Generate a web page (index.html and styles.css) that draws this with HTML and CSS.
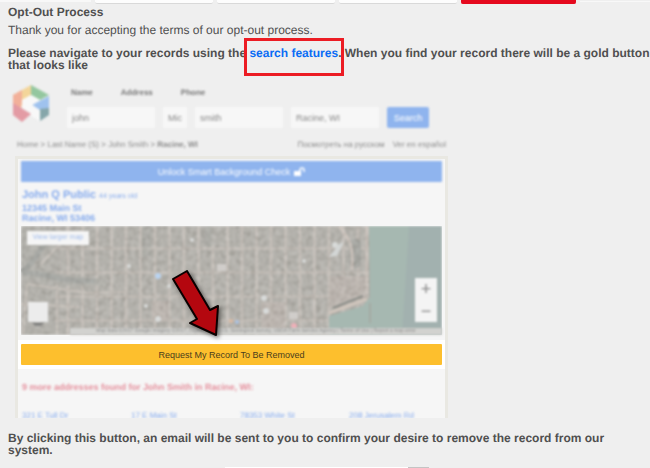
FILE: index.html
```html
<!DOCTYPE html>
<html lang="en">
<head>
    <meta charset="UTF-8">
    <meta name="viewport" content="width=device-width, initial-scale=1.0">
    <title>Opt-Out Process</title>
    <link rel="stylesheet" href="styles.css">
</head>
<body>
    <div class="topbar">
        <span class="strip"></span>
        <span class="box"></span>
        <span class="box"></span>
        <span class="box"></span>
        <span class="box red"></span>
        <span class="rest"></span>
    </div>

    <main class="content">
        <h1>Opt-Out Process</h1>
        <p class="thanks">Thank you for accepting the terms of our opt-out process.</p>
        <p class="note">Please navigate to your records using the <a class="search-link" href="#">search features</a>. When you find your record there will be a gold button that looks like</p>

        <div class="sample">
            <div class="sample-header soft">
                <svg class="logo" viewBox="0 0 37 37">
                    <path d="M0 10 18 0v10L9 15v6L0 17z" fill="#f3d59a"/>
                    <path d="M0 10 9 5v10l-1 9-8-5z" fill="#f2b09a"/>
                    <path d="M18 0 36 10l-9 5-9-5z" fill="#94c79f"/>
                    <path d="M36 11v13l-9 2-8-6z" fill="#9fc2ee"/>
                    <path d="M0 18l18 11-9 8-9-7z" fill="#e39ba4"/>
                    <path d="M27 24l9-1v7l-9 6z" fill="#86a6aa"/>
                    <path d="M18 10l9 5-8 5 8 5v11l-9-5v-3l-9-6v-7z" fill="#f8f8f8"/>
                </svg>
                <div class="search">
                    <nav class="tabs">
                        <a href="#">Name</a>
                        <a href="#">Address</a>
                        <a href="#">Phone</a>
                    </nav>
                    <form class="fields">
                        <input type="text" value="john" aria-label="First name">
                        <input class="mid" type="text" value="Mic" aria-label="Middle name">
                        <input type="text" value="smith" aria-label="Last name">
                        <input type="text" value="Racine, WI" aria-label="City and state">
                        <button type="button">Search</button>
                    </form>
                </div>
            </div>

            <div class="crumbs soft">
                <span>Home &gt; Last Name (S) &gt; John Smith &gt; <b>Racine, WI</b></span>
                <span class="langs"><a href="#">Посмотреть на русском</a><a href="#">Ver en español</a></span>
            </div>

            <div class="card">
                <button class="unlock soft" type="button">Unlock Smart Background Check
                    <svg width="11" height="10" viewBox="0 0 11 10"><path d="M0 4h7v5H0z" fill="#fff"/><path d="M6 5V3a2 2 0 0 1 4 0v2" fill="none" stroke="#fff" stroke-width="1.5"/></svg>
                </button>
                <div class="person soft">
                    <h2>John Q Public <small>44 years old</small></h2>
                    <address>12345 Main St<br>Racine, WI 53406</address>
                </div>

                <div class="map">
                    <svg class="aerial" viewBox="0 0 421 109" preserveAspectRatio="xMidYMid slice">
                        <defs>
                            <pattern id="blocks" width="14.5" height="24" patternUnits="userSpaceOnUse" patternTransform="translate(2 -3)">
                                <path d="M1.5 0v24" stroke="#cac1ba" stroke-width="2.4"/>
                                <path d="M8.5 0v24" stroke="#b5b1ab" stroke-width="1"/>
                                <path d="M0 1.5h14.5" stroke="#c4bbb4" stroke-width="2"/>
                            </pattern>
                            <filter id="grain" x="0" y="0" width="100%" height="100%">
                                <feTurbulence type="fractalNoise" baseFrequency="0.2" numOctaves="3" seed="4"/>
                                <feColorMatrix values="1.2 .4 0 0 -.15  1.2 .4 0 0 -.16  1.2 .4 0 0 -.19  0 0 0 0 .22"/>
                            </filter>
                        </defs>
                        <g class="ground">
                            <path d="M0 0h421v109H0z" fill="#a9a7a1"/>
                            <path d="M34 0h314v109H34z" fill="url(#blocks)" opacity=".75"/>
                            <path d="M0 0h34L5 40l40 9 40 4v6l-43 1-42-8z" fill="#a8a7a1"/>
                            <path d="M0 46C12 40 20 20 34 4M2 47c25-1 30 9 72 8" fill="none" stroke="#999b97" stroke-width="5"/>
                            <path d="M20 38 48 8M6 58l60 9 40-1M0 78l58 3M36 58v50M6 58l-4 50" fill="none" stroke="#c0b9b2" stroke-width="2"/>
                            <path d="M121 0h9v30h-9zM183 0h10v20h-10z" fill="#9c9d98" opacity=".6"/>
                            <path d="M240 76h24v33h-24zM308 50h38v21l-26 11h-12zM131 75h16v20h-16z" fill="#b5ada6" opacity=".8"/>
                            <rect x="328" y="13" width="12" height="29" rx="5" fill="#999a95"/>
                            <path d="M318 0c8 12 15 14 13 44M346 0v68" fill="none" stroke="#c6bcb5" stroke-width="3"/>
                            <path d="M0 0h348v109H0z" filter="url(#grain)"/>
                            <path d="M308 31l10-13 5-2-7 14z" fill="#d3d6d5"/>
                            <path d="M348 0h73v109h-113V90l34-10 7-9z" fill="#a6b8b1"/>
                            <path d="M388 0h33v109h-40z" fill="#a2b1af"/>
                            <path d="M308 87l38-14" stroke="#cfc5bc" stroke-width="3"/>
                            <path d="M312 82l30-12" stroke="#8c8e89" stroke-width="2"/>
                            <path d="M349 77v20" stroke="#a39c95"/>
                            <path d="M196 38h9v7h-9zM268 86h9v7h-9z" fill="#d0cdca"/>
                            <g fill="#d8dad9">
                                <circle cx="171" cy="14" r="2"/><circle cx="125" cy="80" r="2"/><circle cx="148" cy="60" r="2"/>
                                <circle cx="283" cy="35" r="2"/><circle cx="243" cy="72" r="3"/><circle cx="245" cy="85" r="3"/>
                                <circle cx="137" cy="93" r="3"/><circle cx="108" cy="40" r="2"/><circle cx="314" cy="19" r="3"/>
                            </g>
                            <circle cx="137" cy="50" r="3" fill="#b9d3f0"/>
                            <circle cx="273" cy="100" r="3" fill="#eeb0b8"/>
                            <circle cx="210" cy="95" r="2" fill="#dcbaa2"/>
                            <circle cx="216" cy="96" r="2" fill="#aac2e2"/>
                            <path d="M11 96h12l-3 4h-6z" fill="#868684"/>
                        </g>
                    </svg>
                    <a class="map-link soft" href="#">View larger map</a>
                    <span class="thumb soft"></span>
                    <div class="zoom soft">
                        <button type="button" aria-label="Zoom in">+</button>
                        <button type="button" aria-label="Zoom out">−</button>
                    </div>
                    <div class="credits soft">Map data ©2017 Google Imagery ©2017, DigitalGlobe, U.S. Geological Survey, USDA Farm Service Agency | Terms of Use | Report a map error</div>
                    <svg class="arrow" width="56" height="74" viewBox="0 0 56 74">
                        <path d="M5 11 19 3 42 42 50 38 48 67 22 55 29 51z" fill="#b4070f" stroke="#0a0000" stroke-width="2" stroke-linejoin="round"/>
                    </svg>
                </div>

                <div class="remove">
                    <button type="button">Request My Record To Be Removed</button>
                </div>

                <p class="more soft">9 more addresses found for John Smith in Racine, WI:</p>
                <div class="addresses">
                    <a href="#">321 E Tull Dr</a>
                    <a href="#">17 E Main St</a>
                    <a href="#">78353 White St</a>
                    <a href="#">208 Jerusalem Rd</a>
                </div>
            </div>
        </div>

        <p class="note confirm">By clicking this button, an email will be sent to you to confirm your desire to remove the record from our system.</p>
    </main>

    <div class="bottom"><span class="line"></span><span class="mark"></span></div>
</body>
</html>
```
FILE: styles.css
```css
* {
    box-sizing: border-box;
}
body {
    margin: 0;
    background: #efefef;
    color: #505050;
    font-family: "Liberation Sans", Arial, sans-serif;
    font-size: 12px;
    text-rendering: geometricPrecision;
    overflow: hidden;
}
h1, h2, p, address {
    margin: 0;
}
a {
    color: inherit;
    text-decoration: none;
}
button, input {
    border: 0;
    margin: 0;
    padding: 0;
    font-family: inherit;
}

/* cut off search bar at the top */
.topbar {
    display: flex;
    gap: 4px;
    height: 4px;
}
.strip {
    width: 91px;
    height: 2px;
    background: #f8f8f8;
}
.box {
    width: 118px;
    background: #fdfdfd;
    border-bottom: 1px solid #d9d9d9;
    border-radius: 0 0 2px 2px;
}
.box.red {
    width: 115px;
    background: #e5091e;
    border-color: #e5091e;
}
.rest {
    flex: 1;
    height: 2px;
    border-bottom: 1px solid #f8f8f8;
}

.content {
    padding-left: 8px;
}
h1 {
    font-size: 12px;
    line-height: 16px;
}
.thanks {
    margin-top: 2px;
    line-height: 16px;
}
.note {
    margin-top: 9px;
    font-weight: bold;
    line-height: 12px;
}
.search-link {
    position: relative;
    color: #0a6cf5;
}
.search-link::after {
    content: "";
    position: absolute;
    inset: -8px -6px -16px -5px;
    border: 3px solid #ec1c24;
}

/* example of a record page */
.sample {
    max-width: 440px;
    padding: 14px 0 0 1px;
}
.soft {
    filter: blur(1px);
}
.sample-header {
    display: flex;
    gap: 17px;
    padding-left: 4px;
}
.logo {
    flex: none;
    width: 37px;
    height: 37px;
}
.search {
    flex: 1;
    min-width: 0;
}
.tabs {
    display: flex;
    gap: 28px;
    padding-left: 4px;
    font-size: 8px;
    font-weight: bold;
    line-height: 16px;
    color: #777;
}
.fields {
    display: flex;
    gap: 8px;
    margin-top: 6px;
    padding-right: 19px;
}
.fields input {
    flex: 1;
    min-width: 0;
    height: 21px;
    padding: 0 5px;
    background: #f7f7f7;
    color: #888;
    font-size: 9px;
}
.fields .mid {
    flex: 0 0 24px;
}
.fields button {
    width: 42px;
    background: #8fb4ee;
    color: #fff;
    font-size: 9px;
    border-radius: 2px;
}
.crumbs {
    display: flex;
    justify-content: space-between;
    margin-top: 11px;
    padding: 0 2px 0 8px;
    font-size: 8px;
    line-height: 12px;
    color: #8c8c8c;
}
.langs {
    display: flex;
    gap: 8px;
}
.card {
    margin: 5px 0 0 6px;
    padding-top: 2px;
    border: 3px solid #e9e8e2;
    border-bottom: 0;
    background: #f6f6f6;
}
.unlock {
    display: flex;
    align-items: center;
    justify-content: center;
    gap: 4px;
    width: calc(100% - 6px);
    height: 21px;
    margin: 0 3px;
    background: #8fb4ee;
    color: #fff;
    font-size: 9px;
    border-radius: 1px;
}
.person {
    padding: 7px 4px 3px;
    color: #86abed;
}
.person h2 {
    font-size: 11px;
    line-height: 13px;
}
.person small {
    font-size: 7px;
    font-weight: normal;
}
.person address {
    font-size: 9px;
    font-weight: bold;
    font-style: normal;
    line-height: 10px;
}

.map {
    position: relative;
    height: 109px;
    margin: 0 3px;
}
.aerial {
    display: block;
    width: 100%;
    height: 100%;
}
.ground {
    filter: blur(0.8px);
}
.map-link {
    position: absolute;
    left: 6px;
    top: 5px;
    width: 62px;
    background: #f5f5f5;
    color: #9db9ea;
    font-size: 7px;
    line-height: 14px;
    text-align: center;
}
.thumb {
    position: absolute;
    left: 7px;
    bottom: 13px;
    width: 20px;
    height: 20px;
    background: #ececec;
}
.zoom {
    position: absolute;
    right: 5px;
    bottom: 13px;
    width: 22px;
    background: #f4f4f4;
}
.zoom button {
    display: block;
    width: 100%;
    height: 22px;
    background: none;
    color: #888;
    font-size: 18px;
    line-height: 22px;
}
.credits {
    position: absolute;
    left: 49px;
    right: 0;
    bottom: 0;
    overflow: hidden;
    background: #d2d2cf;
    color: #888;
    font-size: 5px;
    line-height: 7px;
    white-space: nowrap;
    text-align: center;
}
.arrow {
    position: absolute;
    left: 147px;
    top: 42px;
    filter: drop-shadow(2px 2px 2px rgba(0, 0, 0, 0.5));
}

.remove {
    margin-top: 5px;
    padding: 4px 3px;
    background: #fff;
}
.remove button {
    display: block;
    width: 100%;
    height: 21px;
    background: #fdbf2d;
    color: #4a3d1c;
    font-size: 9px;
    border-radius: 1px;
}
.more {
    margin: 12px 4px 0;
    color: #e58f9c;
    font-size: 9px;
    font-weight: bold;
    line-height: 12px;
}
.addresses {
    display: grid;
    grid-template-columns: repeat(3, 109px) 1fr;
    height: 9px;
    margin-top: 16px;
    padding: 2px 0 0 4px;
    overflow: hidden;
    color: #86abed;
    font-size: 8px;
    line-height: 10px;
    white-space: nowrap;
}
.addresses a {
    filter: blur(1px);
}
.confirm {
    margin-top: 14px;
}
.bottom {
    display: flex;
    height: 2px;
    margin-top: 11px;
    padding-left: 225px;
}
.bottom .line {
    width: 183px;
    background: #fff;
}
.bottom .mark {
    width: 21px;
    background: #c4c4c4;
}
```
